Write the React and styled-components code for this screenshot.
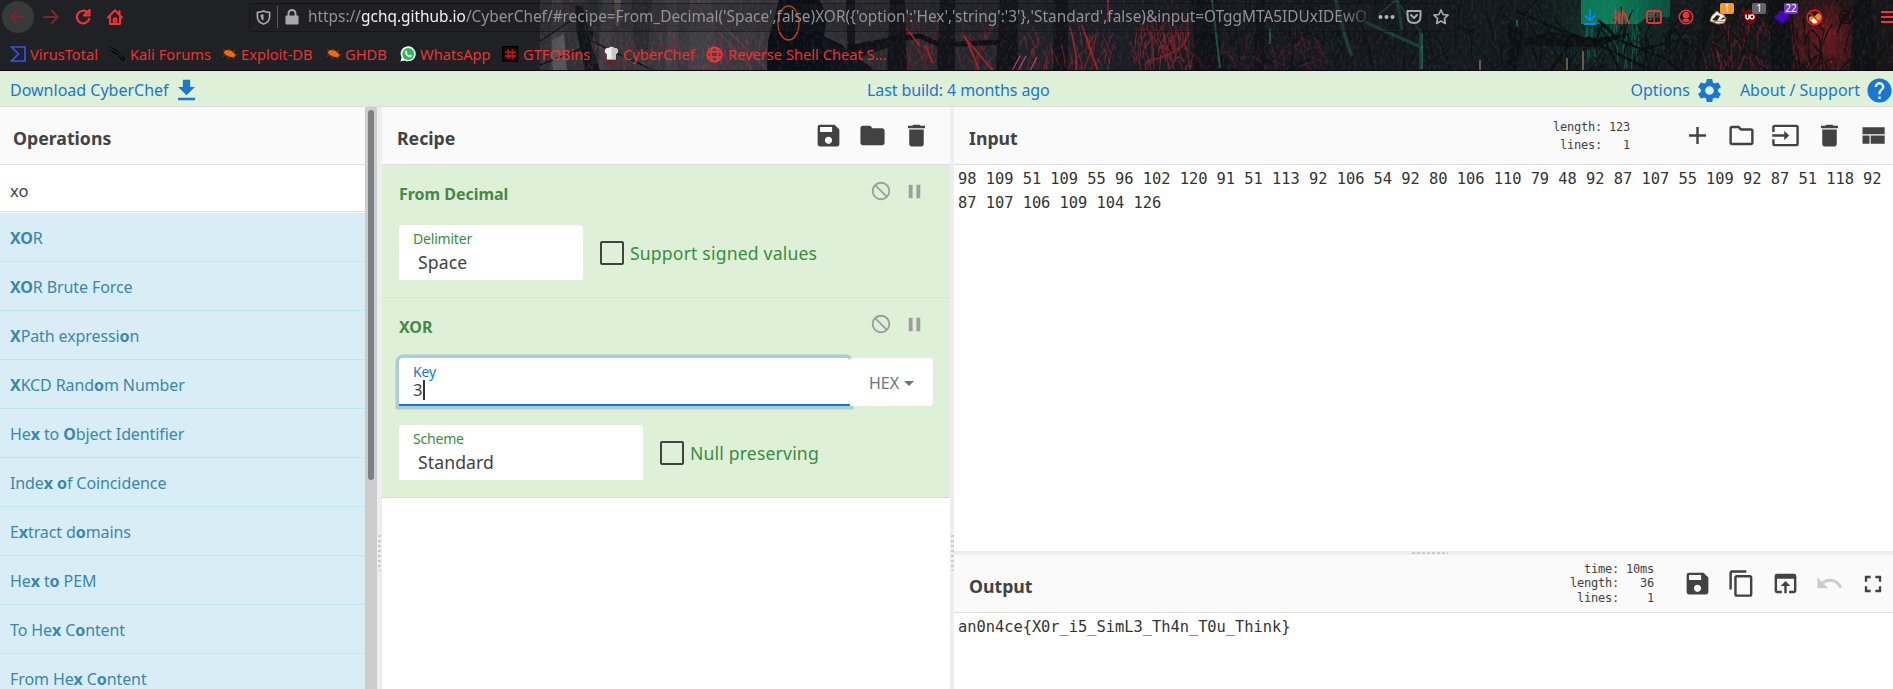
import React from "react";
import styled, { createGlobalStyle, css } from "styled-components";
import {
  MdSave, MdFolder, MdDelete, MdAdd, MdOutlineFolder, MdInput, MdContentCopy,
  MdOpenInBrowser, MdUndo, MdFullscreen, MdSettings, MdHelp, MdFileDownload,
  MdNotInterested, MdPause,
} from "react-icons/md";

const Global = createGlobalStyle`
  * { box-sizing: border-box; }
  html, body { margin: 0; height: 100%; overflow: hidden; }
  body { background: #fff; font-family: "Noto Sans", "Open Sans", sans-serif; font-size: 16px; color: #424242; }
  #root { height: 100%; }
  svg { display: block; flex: none; }
`;

const Page = styled.div`
  display: flex;
  flex-direction: column;
  height: 689px;
  width: 1893px;
  overflow: hidden;
`;

/* ---------- browser chrome ---------- */
const Chrome = styled.header`
  position: relative;
  height: 71px;
  flex: none;
  background: #202124;
  border-bottom: 1px solid #0d0810;
  overflow: hidden;
`;
const Art = styled.svg`
  position: absolute;
  top: 0;
  right: 0;
`;
const NavRow = styled.div`
  position: relative;
  display: flex;
  align-items: center;
  height: 34px;
`;
const NavButtons = styled.div`
  display: flex;
  flex: none;
  width: 249px;
  padding-left: 2px;
`;
const NavButton = styled.div`
  display: flex;
  align-items: center;
  justify-content: center;
  width: 32px;
  height: 32px;
  margin-right: ${(p) => p.$gap || 0}px;
  border-radius: 50%;
  color: ${(p) => (p.$dim ? "#7c2729" : "#f03434")};
  background: ${(p) => (p.$round ? "#38393b" : "transparent")};
`;
const UrlBar = styled.div`
  display: flex;
  flex: none;
  align-items: center;
  width: 1210px;
  height: 29px;
  padding-left: 6px;
  border: 1px solid rgba(12, 12, 14, 0.45);
  border-radius: 3px;
  background: rgba(32, 33, 36, 0.25);
  color: #a9a9ab;
`;
const Divider = styled.span`
  width: 1px;
  height: 22px;
  margin: 0 7px 0 6px;
  background: #5b5b66;
`;
const Url = styled.div`
  flex: none;
  width: 1063px;
  margin-left: 9px;
  white-space: nowrap;
  font-size: 15.4px;
  line-height: 24px;
  color: #929294;
  mask-image: linear-gradient(to right, #000 1030px, rgba(0, 0, 0, 0.25) 1062px);
  b { font-weight: 400; color: #f2f2f2; }
`;
const UrlActions = styled.div`
  display: flex;
  flex: none;
  align-items: center;
  gap: 11px;
  margin-left: 7px;
`;
const Extensions = styled.div`
  display: flex;
  flex: none;
  margin-left: 115px;
`;
const Ext = styled.div`
  position: relative;
  display: flex;
  flex: none;
  align-items: center;
  justify-content: center;
  width: 32px;
  height: 32px;
`;
const Badge = styled.span`
  position: absolute;
  left: 18px;
  top: 2px;
  min-width: 14px;
  height: 11px;
  border-radius: 2px;
  background: ${(p) => p.$bg};
  color: #fff;
  font-size: 10px;
  line-height: 11px;
  text-align: center;
`;
const Bookmarks = styled.nav`
  position: relative;
  display: flex;
  align-items: center;
  height: 40px;
  padding-left: 10px;
`;
const Bookmark = styled.div`
  display: flex;
  align-items: center;
  gap: 4px;
  width: ${(p) => p.$w}px;
  flex: none;
  color: #e93335;
  font-size: 14.67px;
  white-space: nowrap;
`;

/* ---------- CyberChef frame ---------- */
const Banner = styled.div`
  display: grid;
  grid-template-columns: 867px 1fr auto;
  align-items: center;
  height: 36px;
  flex: none;
  padding-top: 3px;
  background: #dff0d8;
  border-bottom: 1px solid #ddd;
  color: #1976d2;
  white-space: nowrap;
`;
const BannerGroup = styled.div`
  display: flex;
  align-items: center;
  gap: ${(p) => p.$gap}px;
  padding-left: 10px;
  margin-right: ${(p) => p.$mr || 0}px;
`;
const BannerLink = styled.span`
  margin-left: ${(p) => p.$ml || 0}px;
  letter-spacing: ${(p) => p.$ls || 0}px;
`;
const Workspace = styled.main`
  display: flex;
  flex: 1;
  min-height: 0;
`;
const Column = styled.section`
  display: flex;
  flex-direction: column;
  width: ${(p) => p.$w}px;
  flex: none;
  min-height: 0;
`;
const TitleBar = styled.div`
  display: flex;
  align-items: center;
  height: 58px;
  flex: none;
  padding: 0 ${(p) => p.$pr || 0}px 0 ${(p) => p.$pl}px;
  background: #fafafa;
  border-bottom: 1px solid #ddd;
`;
const Title = styled.h2`
  flex: 1;
  margin: 4px 0 0;
  font-size: 17.7px;
  font-weight: 700;
`;
const Tools = styled.div`
  display: flex;
  align-items: center;
  gap: 15px;
`;
const Stats = styled.pre`
  margin: 0 ${(p) => p.$mr}px 0 0;
  font-family: "DejaVu Sans Mono", monospace;
  font-size: 12px;
  letter-spacing: -0.22px;
  line-height: ${(p) => p.$lh}px;
  text-align: right;
`;
const Gutter = styled.div`
  display: flex;
  align-items: center;
  justify-content: center;
  flex: none;
  background: #eee;
  ${(p) => (p.$row ? css`height: 4px; padding-left: 12px;` : css`width: ${p.$w}px; padding-top: 310px;`)}
`;
const Grip = styled.span`
  ${(p) =>
    p.$row
      ? css`width: 36px; height: 2px; background: repeating-linear-gradient(90deg, #ccc 0 3px, #eee 3px 5px);`
      : css`width: 3px; height: 36px; background: repeating-linear-gradient(#ccc 0 2px, #eee 2px 5px);`}
`;

/* ---------- operations ---------- */
const OpsScroll = styled.div`
  display: flex;
  width: 377px;
  flex: none;
`;
const ScrollTrack = styled.div`
  width: 12px;
  padding: 3px 3px 0;
  background: #cdcdcd;
`;
const ScrollThumb = styled.div`
  width: 6px;
  height: 370px;
  border-radius: 3px;
  background: #7d8182;
`;
const Search = styled.div`
  height: 47px;
  flex: none;
  padding: 14px 10px 0;
  margin-bottom: 1px;
  border-bottom: 1px solid #ddd;
  font-size: 16.6px;
  line-height: 24px;
`;
const OpRow = styled.div`
  height: 49px;
  flex: none;
  padding: 13px 10px 0;
  border-bottom: 1px solid #bce8f1;
  background: #d9edf7;
  color: #3a87ad;
  line-height: 25px;
  letter-spacing: -0.1px;
`;

/* ---------- recipe ---------- */
const RecipeOp = styled.article`
  height: ${(p) => p.$h}px;
  flex: none;
  padding: 0 17px;
  background: #dff0d8;
  border-bottom: 1px solid #d0e9c6;
`;
const OpHead = styled.div`
  display: flex;
  align-items: center;
  justify-content: space-between;
  height: 60px;
  padding: 0 7px 0 0;
  color: #468847;
  font-weight: 700;
`;
const OpName = styled.span`
  padding-bottom: 2px;
  letter-spacing: -0.03px;
`;
const OpIcons = styled.div`
  display: flex;
  align-items: center;
  gap: 11px;
  padding-bottom: 8px;
  color: #9e9e9e;
`;
const ArgRow = styled.div`
  display: flex;
  margin-top: ${(p) => p.$mt || 0}px;
`;
const Field = styled.div`
  width: ${(p) => p.$w}px;
  height: 55px;
  padding: 4px 14px 0;
  border-radius: 4px 4px 0 0;
  background: #fff;
`;
const FieldLabel = styled.div`
  color: ${(p) => (p.$active ? "#1976d2" : "#388e3c")};
  font-size: 14px;
  line-height: 20px;
  letter-spacing: -0.2px;
`;
const FieldValue = styled.div`
  padding: 1px 0 0 5px;
  font-size: 17.6px;
  line-height: 25px;
  letter-spacing: 0.1px;
`;
const KeyField = styled.div`
  width: 451px;
  height: 48px;
  padding: 4px 14px 0;
  border-radius: 4px 4px 0 0;
  border-bottom: 2px solid #1976d2;
  background: #fff;
  box-shadow: 0 0 0 3.5px #abced5;
`;
const KeyValue = styled.div`
  display: flex;
  font-size: 16.6px;
  line-height: 16px;
`;
const Caret = styled.span`
  width: 2px;
  height: 20px;
  margin-top: -2px;
  background: #333;
`;
const FormatButton = styled.div`
  position: relative;
  display: flex;
  align-items: center;
  gap: 5px;
  width: 83px;
  height: 48px;
  padding: 2px 0 0 19px;
  border-radius: 0 4px 4px 0;
  background: #fff;
  color: #6c757d;
  font-size: 16px;
`;
const Triangle = styled.i`
  border: 5px solid transparent;
  border-top-color: #6c757d;
  border-bottom: 0;
`;
const Check = styled.label`
  display: flex;
  align-items: center;
  gap: 6px;
  height: 25px;
  margin: 15px 0 0 17px;
  color: #388e3c;
  font-size: 17.6px;
  letter-spacing: 0.17px;
`;
const Box = styled.i`
  width: 24px;
  height: 24px;
  border: 2px solid #424242;
  border-radius: 2px;
`;

/* ---------- input / output ---------- */
const IoText = styled.div`
  flex: ${(p) => (p.$h ? "none" : 1)};
  ${(p) => p.$h && css`height: ${p.$h}px;`}
  padding: 2px 4px;
  font-family: "DejaVu Sans Mono", monospace;
  font-size: 15.4px;
  letter-spacing: -0.03px;
  line-height: 24px;
  color: #333;
  white-space: pre;
`;

/* Seeded generator so the forest is drawn the same way each time */
function rng(seed) {
  let s = seed;
  return () => ((s = (s * 16807) % 2147483647) / 2147483647);
}
function twigs(seed, n, x0, x1, y0, y1, lean, len) {
  const r = rng(seed);
  let d = "";
  for (let i = 0; i < n; i++) {
    const x = x0 + r() * (x1 - x0);
    const y = y0 + r() * (y1 - y0);
    const a = (r() - 0.5) * lean;
    const l = len * (0.3 + r());
    d += `M${x.toFixed(1)} ${y.toFixed(1)}q${(a * 0.2).toFixed(1)} ${(-l * 0.5).toFixed(1)} ${a.toFixed(1)} ${(-l).toFixed(1)}`;
  }
  return d;
}
const S = ({ d, c, w = 1, o = 1 }) => <path d={d} stroke={c} strokeWidth={w} opacity={o} fill="none" />;

function Forest() {
  return (
    <Art width="1353" height="71" viewBox="540 0 1353 71">
      <defs>
        <linearGradient id="sky" x1="0" x2="1">
          <stop offset="0" stopColor="#302f34" />
          <stop offset=".13" stopColor="#39393e" />
          <stop offset=".25" stopColor="#2b2a2f" />
          <stop offset=".36" stopColor="#20222a" />
          <stop offset=".46" stopColor="#181a22" />
          <stop offset=".6" stopColor="#14181e" />
          <stop offset=".75" stopColor="#121a1c" />
          <stop offset="1" stopColor="#171416" />
        </linearGradient>
        <linearGradient id="glow" x1="0" x2="1">
          <stop offset="0" stopColor="#087653" />
          <stop offset=".35" stopColor="#0c7b58" />
          <stop offset="1" stopColor="#094d3b" />
        </linearGradient>
        <radialGradient id="ember">
          <stop offset="0" stopColor="#7c191d" stopOpacity=".85" />
          <stop offset="1" stopColor="#5c1218" stopOpacity="0" />
        </radialGradient>
        <radialGradient id="teal">
          <stop offset="0" stopColor="#0a4a3a" stopOpacity=".6" />
          <stop offset="1" stopColor="#083528" stopOpacity="0" />
        </radialGradient>
        <filter id="grain" x="0" y="0" width="100%" height="100%">
          <feTurbulence type="fractalNoise" baseFrequency=".35 .2" numOctaves="3" seed="4" />
          <feColorMatrix values="0 0 0 0 .55  0 0 0 0 .5  0 0 0 0 .55  1.2 0 0 0 -.55" />
        </filter>
      </defs>
      <rect x="540" width="1353" height="71" fill="url(#sky)" />
      <path d="M552 0h10l4 71h-16zM604 0h8l-2 71h-14zM690 0h22l6 71h-30zM668 0h9v71h-12z" fill="#4a484b" opacity=".4" />
      <path d="M585 0h14v71h-10zM632 0h20l-4 50h-14z" fill="#232428" opacity=".6" />
      <path d="M614 0h7l-2 26h-3zM552 40l12-6 3 37h-14z" fill="#66625f" opacity=".65" />
      <path d="M575 5l8 2 5 22 8 4-6 8 10 30h-15l-8-38z" fill="#101417" />
      <S d="M540 41L572 20M540 65l50-20M585 38l70 33" c="#101215" w="1.4" />
      <S d="M590 25l34 25 30 21" c="#58482e" w="1" o=".7" />
      <S d={twigs(7, 70, 592, 765, 48, 72, 24, 15)} c="#9a284a" w=".7" o=".6" />
      <S d={twigs(9, 45, 560, 790, 20, 75, 20, 22)} c="#73585f" w=".6" o=".4" />
      <S d="M690 0l64 71M698 0l70 71" c="#5c504e" w="2" o=".4" />
      <path d="M779 0h40q9 12 7 24l-2 12 20 10 3 25h-80l1-30z" fill="#0b0e16" />
      <path d="M820 36l25 13 48-10v7l-35 12 18 13h-45z" fill="#10131a" />
      <S d={twigs(15, 50, 895, 1010, 40, 80, -34, 26)} c="#7c1f28" w="1.1" o=".65" />
      <S d={twigs(26, 80, 1135, 1190, 30, 76, 16, 18)} c="#96232a" w="1.1" o=".65" />
      <path d="M846 0h9v60h-7zM890 0h15l2 71h-20zM940 0h15v71h-18zM1000 0h18v71h-22zM1054 0h14v71h-15zM1192 0h24l8 71h-30zM1256 0h8v71h-9z" fill="#0e1116" opacity=".9" />
      <S d="M848 48L890 40 920 36 940 45 1000 42" c="#0c0f14" w="5" />
      <S d="M964 35q10 20 15 36M967 40l26 31M1070 27q8 28 6 44M1082 25q6 18 16 46M1108 0v22M906 28l14 18M925 45l8 18" c="#b4232a" w="1.8" o=".85" />
      <S d={twigs(22, 40, 1018, 1110, 44, 78, -18, 20)} c="#a82425" w="1" o=".6" />
      <S d="M1147 62q20-6 30-12t12-20M1150 30q4 16 2 34" c="#8a2228" w="2.5" o=".6" />
      <S d="M1012 71l8-15M1018 71l8-15M1030 71l7-14" c="#b04475" w="1.2" />
      <S d={twigs(31, 45, 1195, 1330, 44, 76, 36, 14)} c="#8b2028" w=".7" o=".6" />
      <S d={twigs(33, 100, 1200, 1550, 15, 80, 60, 35)} c="#0a1011" w="1.5" o=".7" />
      <S d="M1336 0q6 30 16 56M1397 0l5 30M1365 22l58 26" c="#1b5145" w="3.5" o=".65" />
      <S d="M1422 33v36M1270 28v16M1212 0l8 68M1517 20v18" c="#188065" w="2" o=".6" />
      <S d="M1378 15l18-15 24 31v40" c="#143c36" w="2" />
      <ellipse cx="1610" cy="30" rx="80" ry="45" fill="url(#teal)" />
      <path d="M1581 0h89v17l-24 1-8 6h-57z" fill="url(#glow)" />
      <S d={twigs(41, 28, 1585, 1640, 30, 70, 4, 18)} c="#148a66" w="1.3" o=".45" />
      <path d="M1508 25q18 0 14 18l-8 28h-5zM1500 44l50-12 42 6 40-5-34 14-50-1z" fill="#0b1012" />
      <S d="M1515 11l30 13 48 18 60 29M1598 20l20 20 46 18 16 13M1550 71l20-28 40-4M1620 71l-15-30M1640 50l40-10" c="#080d0e" w="2" />
      <S d={twigs(47, 65, 1560, 1730, 35, 80, 40, 25)} c="#081011" w="1.2" />
      <S d="M1583 51v20M1567 58v13M1480 60v11" c="#8f7350" w="2" o=".7" />
      <ellipse cx="1825" cy="38" rx="50" ry="52" fill="url(#ember)" />
      <S d={twigs(51, 85, 1700, 1850, 25, 80, 24, 20)} c="#8f1c20" w=".9" o=".6" />
      <path d="M1705 0h10l-8 40-9 31h-4zM1768 0h20l6 71h-22zM1854 0h17l5 71h-26z" fill="#0d1113" />
      <S d={twigs(57, 70, 1715, 1885, 15, 80, 46, 28)} c="#120f11" w="1.4" />
      <rect x="540" width="1353" height="71" filter="url(#grain)" opacity=".22" />
      <ellipse cx="788.5" cy="23" rx="10.5" ry="17" fill="none" stroke="#e24a18" strokeWidth="1.3" />
    </Art>
  );
}

/* ---------- small drawings ---------- */
const Bug = () => (
  <svg width="15" height="16" viewBox="0 0 16 16">
    <path d="M1.500 6l3.500-2.500 5 1 4.500 4-1.500 3-5-.5-4-2z" fill="#f06a14" />
    <path d="M4 4.500L1 3.500M7 5l1-2.500M11 6l3-2M3 9l-2 2M7 10.500l-1 2.500M11 11l2 2M14 9h2" stroke="#a8460f" strokeWidth=".9" />
  </svg>
);
const VtIcon = () => (
  <svg width="16" height="16" viewBox="0 0 16 16">
    <path d="M1.500 1H15v14H1.500L8.500 8z" fill="none" stroke="#3c50ef" strokeWidth="1.7" />
  </svg>
);
const KaliIcon = () => (
  <svg width="17" height="16" viewBox="0 0 17 16">
    <path d="M0 1l4 1 5 3 3 4 4 3-1 3-3-1-3-5-5-2z" fill="#050505" />
    <path d="M1 2l8 5 5 6" stroke="#46464a" strokeWidth=".8" fill="none" />
  </svg>
);
const WhatsIcon = () => (
  <svg width="16" height="16" viewBox="0 0 17 16">
    <path d="M.5 16l1.200-4.300A8 8 0 1 1 5 14.900z" fill="#fff" />
    <circle cx="8.700" cy="8" r="6.300" fill="#1fc14c" />
    <path d="M5.800 4.500l1.200-.3 1 2-.8 1.100q.8 1.600 2.300 2.200l1-1 2 1-.3 1.300q-1.300 1.200-3.600 0Q5.800 9.400 5.200 7 5 5.500 5.800 4.500z" fill="#fff" />
  </svg>
);
const GtfoIcon = () => (
  <svg width="17" height="16" viewBox="0 0 17 16">
    <rect x=".7" y=".7" width="15" height="14.600" fill="#160a0b" stroke="#000" strokeWidth="1.300" />
    <path d="M6.200 3v10M10.500 3v10M3 6.200h11M3 10h11" stroke="#b51318" strokeWidth="1.800" />
  </svg>
);
const ChefIcon = () => (
  <svg width="15" height="26" viewBox="0 0 16 26">
    <path d="M3 19V13Q0 12 1 8.500 2.500 6 5 6.500 8 4 11 6.500q4 0 4 3 0 3-2.500 3.500v6z" fill="#ececec" />
    <path d="M8 5.500q2 0 3 1 4 0 4 3 0 3-2.500 3.500v6H8z" fill="#c9c9c9" />
    <path d="M3 19h10l1 6H1z" fill="#60262c" />
  </svg>
);
const GlobeIcon = () => (
  <svg width="18" height="17" viewBox="0 0 18 17" fill="none" stroke="#f03434" strokeWidth="1.800">
    <circle cx="8.500" cy="8.500" r="7.200" /><ellipse cx="8.500" cy="8.500" rx="3.600" ry="7.200" /><path d="M2 5.800h13M2 11.200h13" />
  </svg>
);

const BOOKMARKS = [
  ["VirusTotal", <VtIcon />, 99], ["Kali Forums", <KaliIcon />, 113], ["Exploit-DB", <Bug />, 104],
  ["GHDB", <Bug />, 74], ["WhatsApp", <WhatsIcon />, 102], ["GTFOBins", <GtfoIcon />, 102],
  ["CyberChef", <ChefIcon />, 102], ["Reverse Shell Cheat S...", <GlobeIcon />, 200],
];

const Line = ({ children, size = 16, w = 2, color = "currentColor" }) => (
  <svg width={size} height={size} viewBox="0 0 16 16" fill="none" stroke={color} strokeWidth={w} strokeLinejoin="round" strokeLinecap="round">
    {children}
  </svg>
);

function Browser() {
  return (
    <Chrome>
      <Forest />
      <NavRow>
        <NavButtons>
          <NavButton $dim $round $gap={1}><Line><path d="M15 8H1.500M7 2L1.300 8 7 14" /></Line></NavButton>
          <NavButton $dim><Line><path d="M1 8h13.500M9 2l5.700 6L9 14" /></Line></NavButton>
          <NavButton><Line w={2.2}><path d="M14.200 10A6.300 6.300 0 1 1 12.500 3.400M14.500 1v5.500H9z" /></Line></NavButton>
          <NavButton><Line w={2}><path d="M1 8.500L8 1.200l7 7.300M3 7.500V15h10V7.500M6.800 15V9.500h2.500V15M12.500 2v3" /></Line></NavButton>
        </NavButtons>
        <UrlBar>
          <Line size={15} w={1.8}><path d="M8 1q3 1.500 6.500 1.500V7q0 6-6.500 8Q1.500 13 1.500 7V2.500Q5 2.500 8 1z" /><path d="M8 4.500v7q-3-1.300-3-4.500V5z" fill="currentColor" stroke="none" /></Line>
          <Divider />
          <svg width="14" height="16" viewBox="0 0 14 16"><path d="M1 7h12v8H1z" fill="#a9a9ab" stroke="#a9a9ab" strokeLinejoin="round" /><path d="M3.500 7V4.500a3.500 3.500 0 0 1 7 0V7" fill="none" stroke="#a9a9ab" strokeWidth="2" /></svg>
          <Url>
            https://<b>gchq.github.io</b>/CyberChef/#recipe=From_Decimal('Space',false)XOR({"{"}'option':'Hex','string':'3'{"}"},'Standard',false)&amp;input=OTggMTA5IDUxIDEwO
          </Url>
          <UrlActions>
            <svg width="17" height="16" viewBox="0 0 17 16" fill="#b4b4b5"><circle cx="2.500" cy="8" r="2" /><circle cx="8.500" cy="8" r="2" /><circle cx="14.500" cy="8" r="2" /></svg>
            <Line><path d="M1.500 2h13v5q0 7-6.500 7T1.500 7zM5 6l3 3 3-3" /></Line>
            <Line w={1.7}><path d="M8 1l2.100 4.500 4.900.6-3.600 3.400.9 4.900L8 12l-4.300 2.400.9-4.900L1 6.100l4.900-.6z" /></Line>
          </UrlActions>
        </UrlBar>
        <Extensions>
          <Ext><Line color="#0a84ff" w={2}><path d="M8 1v10M3.500 7L8 11.300 12.500 7M2.500 15h11" /></Line></Ext>
          <Ext><Line color="#e93335" w={1.9}><path d="M1.500 1.500v13M5 4v10.500M8.500 1.500v13M11 4.500l4 10" /></Line></Ext>
          <Ext><Line color="#e93335" w={1.9}><rect x="1" y="2" width="14" height="12" rx="2" /><path d="M8 2v12M3.500 5.500h2M3.500 8h2M3.500 10.500h2" strokeWidth="1.200" /></Line></Ext>
          <Ext><Line color="#e93335" w={1.5}><circle cx="8" cy="8" r="6.700" /><circle cx="8" cy="6.200" r="2.600" fill="#e93335" /><path d="M4 11q4-2.500 8 0-1.500 2.200-4 2.200T4 11z" fill="#e93335" stroke="none" /></Line></Ext>
          <Ext>
            <svg width="18" height="16" viewBox="0 0 18 16"><path d="M1 12Q2 6 6 4l2-2 2 2 5 2 2 4-2 4-6 1z" fill="#f6efe6" stroke="#b77b4b" /><path d="M3 11l5-5 3 1-3 5zM11 11l4-3 1 2z" fill="#222" /><path d="M4 13l4-1 7 1" stroke="#777" fill="none" /></svg>
            <Badge $bg="#f39a28">1</Badge>
          </Ext>
          <Ext>
            <svg width="16" height="16" viewBox="0 0 16 16"><path d="M8 0q3 2 7 2 0 11-7 14Q1 13 1 2q4 0 7-2z" fill="#7d060b" /><path d="M4 5.500v3q0 1.500 1.500 1.500T7 8.500v-3" stroke="#fff" fill="none" strokeWidth="1.300" /><circle cx="10" cy="7.800" r="2" stroke="#fff" fill="none" strokeWidth="1.300" /></svg>
            <Badge $bg="#666">1</Badge>
          </Ext>
          <Ext>
            <svg width="17" height="16" viewBox="0 0 17 16"><path d="M0 8v2l8 6 8-7V7z" fill="#28067c" /><path d="M0 8l8-7 8 6-8 7z" fill="#4606b4" /></svg>
            <Badge $bg="#7139c5">22</Badge>
          </Ext>
          <Ext>
            <svg width="17" height="17" viewBox="0 0 17 17"><circle cx="8.500" cy="8.500" r="7" fill="#2a0d0e" /><path d="M3 8l3-1 2 1 4-4 3 2v4l-4 5H7l-4-4z" fill="#e88b25" /><path d="M5 11l3-2 4 1-2 4H7z" fill="#fff" /><circle cx="8.500" cy="8.500" r="7.300" fill="none" stroke="#e32322" strokeWidth="1.400" /><path d="M3.500 3.500l10 10" stroke="#e32322" strokeWidth="1.400" /></svg>
          </Ext>
          <Ext><Line color="#190b0e" w={1.5}><circle cx="8" cy="8" r="6.500" /><circle cx="5.500" cy="6.500" r="1" /><circle cx="10" cy="5.500" r="1" /><circle cx="8.500" cy="10.500" r="1.300" /></Line></Ext>
          <Ext><svg width="32" height="16" viewBox="0 0 32 16"><path d="M19 3h13M19 8h13M19 13h13" stroke="#f03434" strokeWidth="2" /></svg></Ext>
        </Extensions>
      </NavRow>
      <Bookmarks>
        {BOOKMARKS.map(([name, icon, w]) => <Bookmark key={name} $w={w}>{icon}{name}</Bookmark>)}
      </Bookmarks>
    </Chrome>
  );
}

const OPERATIONS = [
  "*XO*R", "*XO*R Brute Force", "*X*Path expressi*o*n", "*X*KCD Rand*o*m Number",
  "He*x* to *O*bject Identifier", "Inde*x* *o*f Coincidence", "E*x*tract d*o*mains",
  "He*x* t*o* PEM", "To He*x* C*o*ntent", "From He*x* C*o*ntent",
];
const highlight = (s) => s.split("*").map((t, i) => (i % 2 ? <b key={i}>{t}</b> : t));

const LayoutIcon = () => (
  <svg width="28" height="29" viewBox="0 0 24 24" fill="currentColor"><path d="M3 19h6v-7H3v7zm7 0h12v-7H10v7zM3 5v6h19V5H3z" /></svg>
);

function Op({ name, h, children }) {
  return (
    <RecipeOp $h={h}>
      <OpHead>
        <OpName>{name}</OpName>
        <OpIcons><MdNotInterested size={22} /><MdPause size={23} /></OpIcons>
      </OpHead>
      {children}
    </RecipeOp>
  );
}
const Select = ({ label, value, w }) => (
  <Field $w={w}><FieldLabel>{label}</FieldLabel><FieldValue>{value}</FieldValue></Field>
);

export default function App() {
  return (
    <>
      <Global />
      <Page>
        <Browser />
        <Banner>
          <BannerGroup $gap={3}><BannerLink>Download CyberChef</BannerLink><MdFileDownload size={29} /></BannerGroup>
          <BannerLink $ls={-0.1}>Last build: 4 months ago</BannerLink>
          <BannerGroup $gap={5} $mr={-1}>
            <BannerLink>Options</BannerLink><MdSettings size={29} />
            <BannerLink $ml={11}>About / Support</BannerLink><MdHelp size={29} />
          </BannerGroup>
        </Banner>
        <Workspace>
          <OpsScroll>
            <Column $w={365}>
              <TitleBar $pl={13}><Title>Operations</Title></TitleBar>
              <Search>xo</Search>
              {OPERATIONS.map((o) => <OpRow key={o}>{highlight(o)}</OpRow>)}
            </Column>
            <ScrollTrack><ScrollThumb /></ScrollTrack>
          </OpsScroll>
          <Gutter $w={5}><Grip /></Gutter>
          <Column $w={568}>
            <TitleBar $pl={15} $pr={19}>
              <Title>Recipe</Title>
              <Tools><MdSave size={29} /><MdFolder size={29} /><MdDelete size={29} /></Tools>
            </TitleBar>
            <Op name="From Decimal" h={133}>
              <ArgRow>
                <Select label="Delimiter" value="Space" w={184} />
                <Check><Box />Support signed values</Check>
              </ArgRow>
            </Op>
            <Op name="XOR" h={200}>
              <ArgRow>
                <KeyField>
                  <FieldLabel $active>Key</FieldLabel>
                  <KeyValue>3<Caret /></KeyValue>
                </KeyField>
                <FormatButton>HEX<Triangle /></FormatButton>
              </ArgRow>
              <ArgRow $mt={19}>
                <Select label="Scheme" value="Standard" w={244} />
                <Check><Box />Null preserving</Check>
              </ArgRow>
            </Op>
          </Column>
          <Gutter $w={4}><Grip /></Gutter>
          <Column $w={939}>
            <TitleBar $pl={15} $pr={6}>
              <Title>Input</Title>
              <Stats $mr={53} $lh={18}>{"length: 123\nlines:   1"}</Stats>
              <Tools><MdAdd size={29} /><MdOutlineFolder size={29} /><MdInput size={29} /><MdDelete size={29} /><LayoutIcon /></Tools>
            </TitleBar>
            <IoText $h={386}>{"98 109 51 109 55 96 102 120 91 51 113 92 106 54 92 80 106 110 79 48 92 87 107 55 109 92 87 51 118 92\n87 107 106 109 104 126"}</IoText>
            <Gutter $row><Grip $row /></Gutter>
            <TitleBar $pl={15} $pr={6}>
              <Title>Output</Title>
              <Stats $mr={29} $lh={14.5}>{"time: 10ms\nlength:   36\nlines:    1"}</Stats>
              <Tools><MdSave size={29} /><MdContentCopy size={29} /><MdOpenInBrowser size={29} /><MdUndo size={29} color="#ccc" /><MdFullscreen size={28} /></Tools>
            </TitleBar>
            <IoText>{"an0n4ce{X0r_i5_SimL3_Th4n_T0u_Think}"}</IoText>
          </Column>
        </Workspace>
      </Page>
    </>
  );
}
